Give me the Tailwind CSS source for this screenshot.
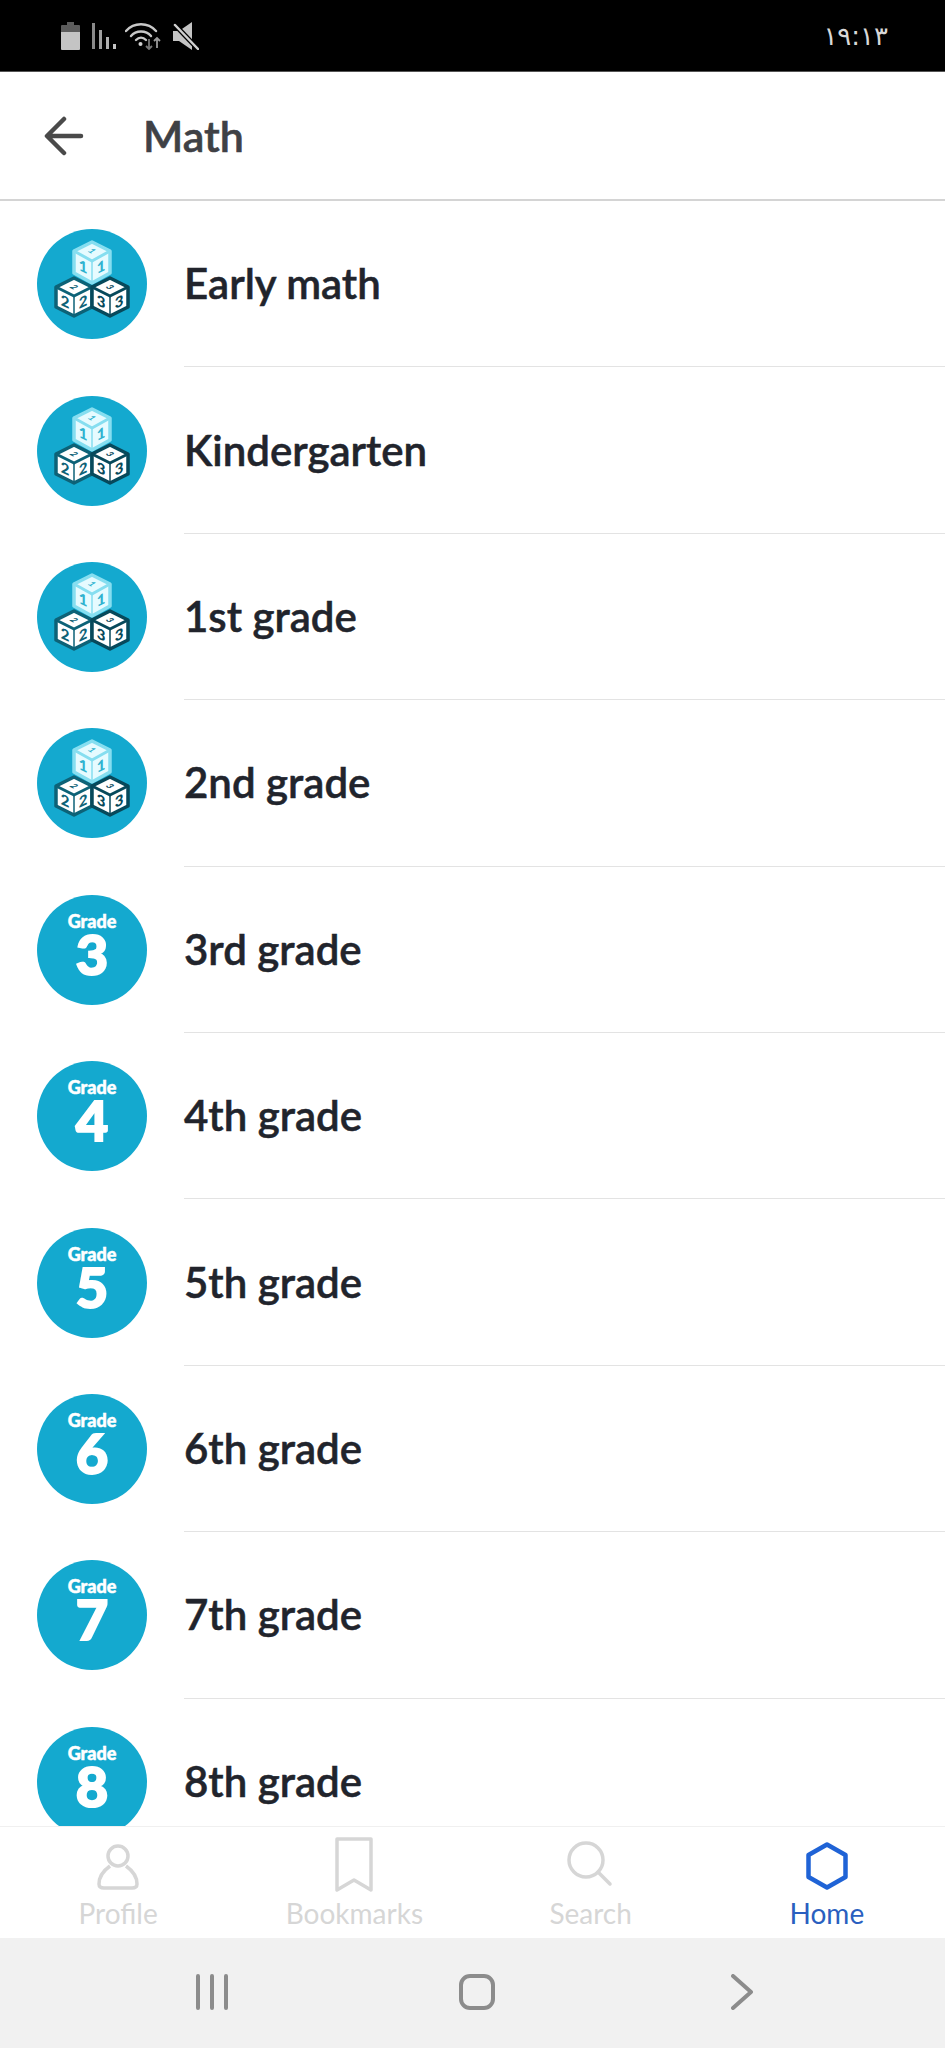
<!DOCTYPE html>
<html lang="en">
<head>
    <meta charset="UTF-8">
    <meta name="viewport" content="width=device-width, initial-scale=1.0">
    <title>Math</title>
    <script src="https://cdn.jsdelivr.net/npm/@tailwindcss/browser@4"></script>
</head>
<body class="bg-white font-['Lato','Liberation_Sans',sans-serif]">
    <!-- shared blocks icon -->
    <svg class="hidden" aria-hidden="true">
        <symbol id="blocks" viewBox="0 0 110 110">
            <g font-family="Lato, sans-serif" font-weight="900" text-anchor="middle" stroke-linejoin="round">
                <!-- top block -->
                <path d="M55 13 L73 22 V44 L55 54 L37 44 V22 Z" fill="#e6fbff" stroke="#86def0" stroke-width="3.500"/>
                <path d="M37 22 L55 32 L73 22" fill="none" stroke="#86def0" stroke-width="3"/>
                <path d="M55 32 V54" stroke="#86def0" stroke-width="1.500"/>
                <text y="4" font-size="11" fill="#2fb2cf" transform="translate(55 22) scale(1 .55) rotate(45)">1</text>
                <text font-size="15" fill="#2fb2cf" transform="translate(46 43) skewY(25)">1</text>
                <text font-size="15" fill="#2fb2cf" transform="translate(64 43) skewY(-25)">1</text>
                <!-- left block -->
                <path d="M37 49 L55 58 V78 L37 87 L19 78 V58 Z" fill="#ffffff" stroke="#0d6277" stroke-width="3.500"/>
                <path d="M19 58 L37 67 L55 58" fill="none" stroke="#0d6277" stroke-width="3"/>
                <path d="M37 67 V87" stroke="#0d6277" stroke-width="1.500"/>
                <text y="4" font-size="11" fill="#0d6277" transform="translate(37 58) scale(1 .55) rotate(45)">2</text>
                <text font-size="15" fill="#0d6277" transform="translate(28 78) skewY(25)">2</text>
                <text font-size="15" fill="#0d6277" transform="translate(46 78) skewY(-25)">2</text>
                <!-- right block -->
                <path d="M73 49 L91 58 V78 L73 87 L55 78 V58 Z" fill="#ffffff" stroke="#07495b" stroke-width="3.500"/>
                <path d="M55 58 L73 67 L91 58" fill="none" stroke="#07495b" stroke-width="3"/>
                <path d="M73 67 V87" stroke="#07495b" stroke-width="1.500"/>
                <text y="4" font-size="11" fill="#07495b" transform="translate(73 58) scale(1 .55) rotate(45)">3</text>
                <text font-size="15" fill="#07495b" transform="translate(64 78) skewY(25)">3</text>
                <text font-size="15" fill="#07495b" transform="translate(82 78) skewY(-25)">3</text>
            </g>
        </symbol>
    </svg>

    <div class="w-[945px] h-[2048px] flex flex-col overflow-hidden">
        <!-- Status bar -->
        <div class="h-[72px] shrink-0 bg-black flex items-center justify-between pl-[61px] pr-[57px] border-b border-[#555]">
            <div class="flex items-center gap-[12px]">
                <svg class="w-[19px] h-[28px]" viewBox="0 0 19 28">
                    <path d="M6 0h7v3h5a1 1 0 0 1 1 1v8H0V4a1 1 0 0 1 1-1h5z" fill="#5c5c5c"/>
                    <path d="M0 10h19v17a1 1 0 0 1-1 1H1a1 1 0 0 1-1-1z" fill="#c4c4c4"/>
                </svg>
                <svg class="w-[24px] h-[26px]" viewBox="0 0 24 26">
                    <rect x="0" y="0" width="3" height="26" fill="#8a8a8a"/>
                    <rect x="7" y="7" width="3" height="19" fill="#a0a0a0"/>
                    <rect x="14" y="14" width="3" height="12" fill="#b0b0b0"/>
                    <rect x="21" y="21" width="3" height="5" fill="#c4c4c4"/>
                </svg>
                <svg class="-ml-[3px] w-[36px] h-[28px]" viewBox="0 0 36 28" fill="none">
                    <path d="M1 9 C9 0 23 0 31 9" stroke="#c8c8c8" stroke-width="2.400" stroke-linecap="round"/>
                    <path d="M6 14 C11 8 21 8 26 14" stroke="#c8c8c8" stroke-width="2.400" stroke-linecap="round"/>
                    <path d="M11 18 C14 15 18 15 21 18" stroke="#c8c8c8" stroke-width="2.400" stroke-linecap="round"/>
                    <circle cx="15.500" cy="22" r="2" fill="#d0d0d0"/>
                    <path d="M24 17v10M21 24l3 3 3-3" stroke="#777" stroke-width="1.800"/>
                    <path d="M32 26V16M29 19l3-3 3 3" stroke="#9a9a9a" stroke-width="1.800"/>
                </svg>
                <svg class="w-[26px] h-[28px]" viewBox="0 0 26 28">
                    <path d="M0 9h6L19 0v28L6 19H0z" fill="#c4c4c4"/>
                    <path d="M1 2 L25 27" stroke="#000" stroke-width="5"/>
                    <path d="M2 3 L25 27" stroke="#d0d0d0" stroke-width="2.500" stroke-linecap="round"/>
                </svg>
            </div>
            <span dir="ltr" class="text-[26px] leading-none text-[#d8d8d8] font-['DejaVu_Sans','Noto_Sans',sans-serif]">۱۹:۱۳</span>
        </div>

        <!-- Header -->
        <header class="h-[129px] shrink-0 flex items-center border-b-2 border-[#d4d4d4] pl-[44px] gap-[59px]">
            <svg class="w-[40px] h-[40px]" viewBox="0 0 40 40" fill="none" stroke="#4a4a4a" stroke-width="4.500" stroke-linecap="round" stroke-linejoin="round">
                <path d="M4 20H37M20 3 3 20l17 17"/>
            </svg>
            <h1 class="text-[43px] leading-none font-semibold text-[#3f4145] [-webkit-text-stroke:0.6px_#3f4145]">Math</h1>
        </header>

        <!-- Course list -->
        <main class="flex-1 overflow-hidden">
            <div class="h-[166.4px] flex items-center pl-[37px] gap-[37px]">
                <svg class="w-[110px] h-[110px] shrink-0 rounded-full bg-[#14a9cf]"><use href="#blocks"/></svg>
                <div class="flex-1 h-full flex items-center border-b border-[#e3e3e3] text-[42px] font-semibold text-[#21242c] [-webkit-text-stroke:0.5px_#21242c]">Early math</div>
            </div>
            <div class="h-[166.4px] flex items-center pl-[37px] gap-[37px]">
                <svg class="w-[110px] h-[110px] shrink-0 rounded-full bg-[#14a9cf]"><use href="#blocks"/></svg>
                <div class="flex-1 h-full flex items-center border-b border-[#e3e3e3] text-[42px] font-semibold text-[#21242c] [-webkit-text-stroke:0.5px_#21242c]">Kindergarten</div>
            </div>
            <div class="h-[166.4px] flex items-center pl-[37px] gap-[37px]">
                <svg class="w-[110px] h-[110px] shrink-0 rounded-full bg-[#14a9cf]"><use href="#blocks"/></svg>
                <div class="flex-1 h-full flex items-center border-b border-[#e3e3e3] text-[42px] font-semibold text-[#21242c] [-webkit-text-stroke:0.5px_#21242c]">1st grade</div>
            </div>
            <div class="h-[166.4px] flex items-center pl-[37px] gap-[37px]">
                <svg class="w-[110px] h-[110px] shrink-0 rounded-full bg-[#14a9cf]"><use href="#blocks"/></svg>
                <div class="flex-1 h-full flex items-center border-b border-[#e3e3e3] text-[42px] font-semibold text-[#21242c] [-webkit-text-stroke:0.5px_#21242c]">2nd grade</div>
            </div>
            <div class="h-[166.4px] flex items-center pl-[37px] gap-[37px]">
                <div class="w-[110px] h-[110px] shrink-0 rounded-full bg-[#14a9cf] flex flex-col items-center pt-[16px] text-white font-black">
                    <span class="text-[18px] leading-[20px] [-webkit-text-stroke:0.5px_white]">Grade</span>
                    <span class="text-[56px] leading-[45px] [-webkit-text-stroke:2px_white]">3</span>
                </div>
                <div class="flex-1 h-full flex items-center border-b border-[#e3e3e3] text-[42px] font-semibold text-[#21242c] [-webkit-text-stroke:0.5px_#21242c]">3rd grade</div>
            </div>
            <div class="h-[166.4px] flex items-center pl-[37px] gap-[37px]">
                <div class="w-[110px] h-[110px] shrink-0 rounded-full bg-[#14a9cf] flex flex-col items-center pt-[16px] text-white font-black">
                    <span class="text-[18px] leading-[20px] [-webkit-text-stroke:0.5px_white]">Grade</span>
                    <span class="text-[56px] leading-[45px] [-webkit-text-stroke:2px_white]">4</span>
                </div>
                <div class="flex-1 h-full flex items-center border-b border-[#e3e3e3] text-[42px] font-semibold text-[#21242c] [-webkit-text-stroke:0.5px_#21242c]">4th grade</div>
            </div>
            <div class="h-[166.4px] flex items-center pl-[37px] gap-[37px]">
                <div class="w-[110px] h-[110px] shrink-0 rounded-full bg-[#14a9cf] flex flex-col items-center pt-[16px] text-white font-black">
                    <span class="text-[18px] leading-[20px] [-webkit-text-stroke:0.5px_white]">Grade</span>
                    <span class="text-[56px] leading-[45px] [-webkit-text-stroke:2px_white]">5</span>
                </div>
                <div class="flex-1 h-full flex items-center border-b border-[#e3e3e3] text-[42px] font-semibold text-[#21242c] [-webkit-text-stroke:0.5px_#21242c]">5th grade</div>
            </div>
            <div class="h-[166.4px] flex items-center pl-[37px] gap-[37px]">
                <div class="w-[110px] h-[110px] shrink-0 rounded-full bg-[#14a9cf] flex flex-col items-center pt-[16px] text-white font-black">
                    <span class="text-[18px] leading-[20px] [-webkit-text-stroke:0.5px_white]">Grade</span>
                    <span class="text-[56px] leading-[45px] [-webkit-text-stroke:2px_white]">6</span>
                </div>
                <div class="flex-1 h-full flex items-center border-b border-[#e3e3e3] text-[42px] font-semibold text-[#21242c] [-webkit-text-stroke:0.5px_#21242c]">6th grade</div>
            </div>
            <div class="h-[166.4px] flex items-center pl-[37px] gap-[37px]">
                <div class="w-[110px] h-[110px] shrink-0 rounded-full bg-[#14a9cf] flex flex-col items-center pt-[16px] text-white font-black">
                    <span class="text-[18px] leading-[20px] [-webkit-text-stroke:0.5px_white]">Grade</span>
                    <span class="text-[56px] leading-[45px] [-webkit-text-stroke:2px_white]">7</span>
                </div>
                <div class="flex-1 h-full flex items-center border-b border-[#e3e3e3] text-[42px] font-semibold text-[#21242c] [-webkit-text-stroke:0.5px_#21242c]">7th grade</div>
            </div>
            <div class="h-[166.4px] flex items-center pl-[37px] gap-[37px]">
                <div class="w-[110px] h-[110px] shrink-0 rounded-full bg-[#14a9cf] flex flex-col items-center pt-[16px] text-white font-black">
                    <span class="text-[18px] leading-[20px] [-webkit-text-stroke:0.5px_white]">Grade</span>
                    <span class="text-[56px] leading-[45px] [-webkit-text-stroke:2px_white]">8</span>
                </div>
                <div class="flex-1 h-full flex items-center border-b border-[#e3e3e3] text-[42px] font-semibold text-[#21242c] [-webkit-text-stroke:0.5px_#21242c]">8th grade</div>
            </div>
        </main>

        <!-- Bottom tabs -->
        <nav class="h-[112px] shrink-0 grid grid-cols-4 bg-white border-t border-[#f0f0f0] text-[28px] leading-[34px] text-[#d6d6d6]">
            <div class="flex flex-col items-center justify-end pb-[8px]">
                <svg class="w-[44px] h-[48px] mb-[5px]" viewBox="0 0 44 48" fill="none" stroke="#d6d6d6" stroke-width="3.500" stroke-linejoin="round">
                    <circle cx="22" cy="13" r="10"/>
                    <path d="M14 23 C7 28 3 34 3 41 C3 44 5 45 8 45 H36 C39 45 41 44 41 41 C41 34 37 28 30 23"/>
                </svg>
                <span>Profile</span>
            </div>
            <div class="flex flex-col items-center justify-end pb-[8px]">
                <svg class="w-[38px] h-[56px] mb-[3px]" viewBox="0 0 38 56" fill="none" stroke="#d6d6d6" stroke-width="3.500" stroke-linejoin="round">
                    <path d="M2 2H36V53L19 43 2 53Z"/>
                </svg>
                <span>Bookmarks</span>
            </div>
            <div class="flex flex-col items-center justify-end pb-[8px]">
                <svg class="w-[46px] h-[46px] mb-[9px] -ml-[1px]" viewBox="0 0 46 46" fill="none" stroke="#d6d6d6" stroke-width="3.500" stroke-linecap="round">
                    <circle cx="19" cy="19" r="17"/>
                    <path d="M31 31 43 43"/>
                </svg>
                <span>Search</span>
            </div>
            <div class="flex flex-col items-center justify-end pb-[8px] text-[#2a5fc0]">
                <svg class="w-[42px] h-[48px] mb-[6px]" viewBox="0 0 42 48" fill="none" stroke="#1f63d6" stroke-width="4.500" stroke-linejoin="round">
                    <path d="M21 2.500 39.500 13V35L21 45.500 2.500 35V13Z"/>
                </svg>
                <span>Home</span>
            </div>
        </nav>

        <!-- Android nav bar -->
        <div class="h-[110px] shrink-0 bg-[#f1f1f1] grid grid-cols-3 items-center pl-[79px] pr-[70px] pb-[2px]">
            <svg class="justify-self-center w-[34px] h-[36px]" viewBox="0 0 34 36" stroke="#8c8c8c" stroke-width="4" stroke-linecap="round">
                <path d="M3 2V34M17 2V34M31 2V34"/>
            </svg>
            <div class="justify-self-center w-[36px] h-[36px] rounded-[11px] border-[4px] border-[#8c8c8c]"></div>
            <svg class="justify-self-center w-[22px] h-[36px]" viewBox="0 0 22 36" fill="none" stroke="#8c8c8c" stroke-width="4" stroke-linecap="round" stroke-linejoin="round">
                <path d="M2 2 20 18 2 34"/>
            </svg>
        </div>
    </div>
</body>
</html>
